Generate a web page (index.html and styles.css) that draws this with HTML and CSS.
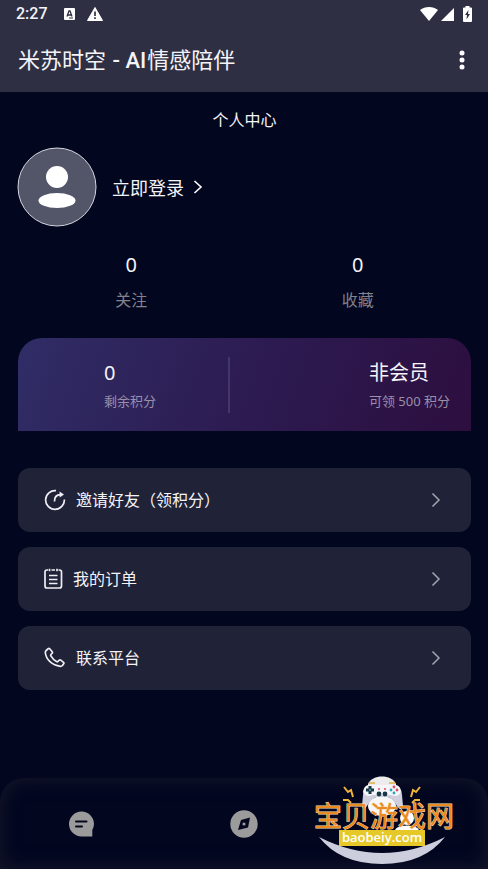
FILE: index.html
```html
<!DOCTYPE html>
<html lang="zh-CN">
<head>
    <meta charset="UTF-8">
    <meta name="viewport" content="width=device-width, initial-scale=1.0">
    <title>米苏时空 - AI情感陪伴</title>
    <link rel="stylesheet" href="styles.css">
</head>
<body>
    <header class="header">
        <div class="status-bar">
            <span class="time">2:27</span>
            <svg width="11" height="12" viewBox="0 0 11 12">
                <rect width="11" height="12" rx="1" fill="#fff"/>
                <path d="M3 8.500L5 3h1l2 5.500M3.800 7h3.400" fill="none" stroke="#2e2f43" stroke-width="1.300"/>
                <path d="M5 10h4" stroke="#2e2f43"/>
            </svg>
            <svg width="16" height="14" viewBox="0 0 16 14">
                <path d="M8 .5L15.500 13.500H.5z" fill="#fff" stroke="#fff" stroke-linejoin="round"/>
                <path d="M8 4.500v4.500M8 10.300v1.700" stroke="#2e2f43" stroke-width="1.700"/>
            </svg>
            <div class="status-right">
                <svg width="18" height="14" viewBox="0 0 18 14"><path d="M0 3C5-1 13-1 18 3L9 14z" fill="#fff"/></svg>
                <svg width="13" height="13" viewBox="0 0 13 13"><path d="M13 0v13H0z" fill="#fff"/></svg>
                <svg class="battery" width="9" height="16" viewBox="0 0 9 16">
                    <path d="M2.500 0h4v1.500H8q1 0 1 1V15q0 1-1 1H1q-1 0-1-1V2.500q0-1 1-1h1.500z" fill="#fff"/>
                    <path d="M5.500 4L2 9h2l-.5 4.500L7 8H5z" fill="#2e2f43"/>
                </svg>
            </div>
        </div>
        <div class="app-bar">
            <h1>米苏时空<span class="latin"> - AI</span>情感陪伴</h1>
            <button class="menu-btn" type="button" aria-label="更多">
                <svg width="6" height="20" viewBox="0 0 6 20" fill="#fff">
                    <circle cx="3" cy="3" r="2.500"/><circle cx="3" cy="10" r="2.500"/><circle cx="3" cy="17" r="2.500"/>
                </svg>
            </button>
        </div>
    </header>

    <main class="content">
        <h2>个人中心</h2>

        <a class="login" href="#login">
            <svg width="80" height="80" viewBox="0 0 80 80">
                <circle cx="40" cy="40" r="39" fill="#535568" stroke="#d5d6df"/>
                <circle cx="40" cy="30" r="11" fill="#fff"/>
                <ellipse cx="40" cy="53.500" rx="18.500" ry="7.500" fill="#fff"/>
            </svg>
            <span>立即登录</span>
            <svg width="10" height="14" viewBox="0 0 10 14"><path d="M1.500 1L8 7l-6.500 6" fill="none" stroke="#fff" stroke-width="1.600"/></svg>
        </a>

        <!-- Follow / favourite counters -->
        <div class="stats">
            <a href="#follow"><strong>0</strong><span>关注</span></a>
            <a href="#favorite"><strong>0</strong><span>收藏</span></a>
        </div>

        <!-- Points and membership -->
        <section class="member-card">
            <div class="points"><strong>0</strong><span>剩余积分</span></div>
            <div class="member"><strong>非会员</strong><span>可领 500 积分</span></div>
        </section>

        <nav class="menu">
            <a href="#invite">
                <svg width="22" height="22" viewBox="0 0 22 22" fill="none" stroke="#eeeef4" stroke-width="1.700">
                    <path d="M12 1.600A9.400 9.400 0 1 0 20.400 10.500"/>
                    <path d="M10.500 12.500C10.300 8 12.500 5.800 16.500 5.600"/>
                    <path d="M15.500 2.500L20 5.500l-4.300 3z" fill="#eeeef4" stroke="none"/>
                </svg>
                <span>邀请好友（领积分）</span>
                <svg class="arrow" width="10" height="16" viewBox="0 0 10 16"><path d="M1.500 1.500L8 8l-6.500 6.500" fill="none" stroke="#a3a3ae" stroke-width="1.500"/></svg>
            </a>
            <a href="#orders">
                <svg width="19" height="22" viewBox="0 0 19 22" fill="none" stroke="#eeeef4" stroke-width="1.700">
                    <path d="M4 2H3Q1 2 1 4v14q0 2 2 2h12.500q2 0 2-2V4q0-2-2-2h-1M7.500 2H11M5.500.8v2.400M13 .8v2.400"/>
                    <path d="M5 7.500h8.500M5 11.500h8.500M5 15.500h8.500"/>
                </svg>
                <span>我的订单</span>
                <svg class="arrow" width="10" height="16" viewBox="0 0 10 16"><path d="M1.500 1.500L8 8l-6.500 6.500" fill="none" stroke="#a3a3ae" stroke-width="1.500"/></svg>
            </a>
            <a href="#contact">
                <svg width="22" height="22" viewBox="0 0 22 22" fill="none" stroke="#eeeef4" stroke-width="1.700" stroke-linejoin="round">
                    <path d="M2.200 3.500L4.200 1.700q.8-.6 1.500.1l2.500 3q.6.800-.1 1.500L7 7.500q-.6.700-.1 1.400 2 3.600 5.600 5.700.8.400 1.400-.1l1.400-1.400q.7-.6 1.500 0l2.700 2.200q.8.700.2 1.500l-1.300 1.700q-.8.900-2 .8C8 18.500 2 12.500 1.300 5.500q0-1.200.9-2z"/>
                </svg>
                <span>联系平台</span>
                <svg class="arrow" width="10" height="16" viewBox="0 0 10 16"><path d="M1.500 1.500L8 8l-6.500 6.500" fill="none" stroke="#a3a3ae" stroke-width="1.500"/></svg>
            </a>
        </nav>
    </main>

    <nav class="tab-bar">
        <a href="#chat" aria-label="聊天">
            <svg width="25" height="26" viewBox="0 0 25 26">
                <path d="M12.500.5A12.400 12.400 0 0 1 25 13q0 3-1.700 6v6.500H12.500a12.500 12.500 0 0 1 0-25z" fill="#9b9b9b"/>
                <path d="M7 10.500h10.500M7 15.500h6" stroke="#04071e" stroke-width="2" stroke-linecap="round"/>
            </svg>
        </a>
        <a href="#explore" aria-label="发现">
            <svg width="28" height="28" viewBox="0 0 28 28">
                <circle cx="14" cy="14" r="13.700" fill="#9b9b9b"/>
                <path d="M20 7.500L18 17.500 8 20l3-10z" fill="#04071e"/>
                <circle cx="14" cy="14" r="1.600" fill="#9b9b9b"/>
            </svg>
        </a>
        <a href="#mine" aria-label="我的">
            <svg width="28" height="28" viewBox="0 0 28 28" fill="#fff">
                <circle cx="14" cy="8" r="7"/><ellipse cx="14" cy="21" rx="12" ry="5.500"/>
            </svg>
        </a>
    </nav>

    <!-- Site badge over the tab bar -->
    <svg class="site-badge" width="144" height="92" viewBox="0 0 144 92">
        <path d="M5 62Q68 94 131 62Q110 89 68 89Q26 89 5 62z" fill="#cdcedd"/>
        <!-- gamepad -->
        <path d="M54 9C58-1 78-1 82 9V17H54z" fill="#ececec"/>
        <ellipse cx="68" cy="31" rx="14" ry="10" fill="#f7f7fa"/>
        <path d="M55 10H81Q87 10 88 20L89 31Q87 37 83 31Q79 24 74 22H62Q57 24 53 31Q49 37 48 31L49 20Q50 10 55 10z" fill="#cfcfdd"/>
        <path d="M55 10H81Q86 10 87 17 84 23 77 20H59Q52 23 49 17 50 10 55 10z" fill="#f5f5fa"/>
        <path d="M55 8h6M75 8h6" stroke="#e5bd62" stroke-width="2"/>
        <path d="M56 11v8M52 15h8" stroke="#183744" stroke-width="3"/>
        <circle cx="56" cy="15" r="1" fill="#55b6b9"/>
        <circle cx="65" cy="19" r="2.400" fill="#183744"/><circle cx="71" cy="19" r="2.400" fill="#183744"/>
        <circle cx="80" cy="12" r="1.400" fill="#d94f64"/><circle cx="80" cy="18" r="1.400" fill="#28a6b8"/>
        <circle cx="77" cy="15" r="1.400" fill="#28a6b8"/><circle cx="83" cy="15" r="1.400" fill="#d94f64"/>
        <path d="M64 14h2M70 14h2" stroke="#e34b59" stroke-width="1.500"/>
        <!-- sparks -->
        <path d="M30 12l4 5 3-2 2 7M29 25l5 0 3 3M106 12l-4 5-3-2-2 7M106 25l-5 0-3 3" fill="none" stroke="#f0b636" stroke-width="2"/>
        <text class="badge-name" x="0" y="52">宝贝游戏网</text>
        <rect x="25" y="55" width="86" height="16" fill="#e6c928"/>
        <text class="badge-site" x="68" y="67" text-anchor="middle">baobeiy.com</text>
    </svg>
</body>
</html>
```
FILE: styles.css
```css
* {
    box-sizing: border-box;
}
body {
    position: relative;
    display: flex;
    flex-direction: column;
    min-height: 100vh;
    margin: 0;
    background-color: #02061f;
    color: #f4f4f8;
    font-family: "Noto Sans", "Noto Sans CJK SC", sans-serif;
}
a {
    color: inherit;
    text-decoration: none;
}
svg {
    display: block;
    flex-shrink: 0;
}
h1, h2 {
    margin: 0;
    font-weight: 400;
}
strong {
    font-weight: 400;
}

/* Header */
.header {
    background-color: #2e2f43;
}
.status-bar {
    display: flex;
    align-items: center;
    gap: 12px;
    height: 28px;
    padding: 0 16px;
}
.time {
    margin-right: 4px;
    font: 500 16px/18px Roboto, sans-serif;
}
.status-right {
    display: flex;
    align-items: center;
    gap: 3px;
    margin-left: auto;
}
.battery {
    margin-left: 6px;
}
.app-bar {
    display: flex;
    align-items: center;
    justify-content: space-between;
    height: 64px;
    padding: 0 16px 0 18px;
}
.app-bar h1 {
    font-size: 22px;
    line-height: 32px;
}
.latin {
    padding: 0 1px;
    font-family: Roboto, sans-serif;
    font-weight: 500;
}
.menu-btn {
    padding: 0 7px;
    border: 0;
    background: none;
}

/* Profile */
.content {
    flex: 1;
    padding: 16px 17px 24px 18px;
}
.content h2 {
    font-size: 16px;
    line-height: 24px;
    text-align: center;
}
.login {
    display: flex;
    align-items: center;
    gap: 9px;
    width: max-content;
    margin: 15px 0 24px;
    font-size: 18px;
}
.login svg:first-child {
    margin: 0 6px 0 -1px;
}
.stats {
    display: grid;
    grid-template-columns: 1fr 1fr;
    margin-bottom: 26px;
}
.stats a {
    display: flex;
    flex-direction: column;
    align-items: center;
    gap: 9px;
}
.stats strong {
    font-size: 20px;
    line-height: 28px;
}
.stats span {
    color: #81828e;
    font-size: 16px;
    line-height: 24px;
}

/* Points card */
.member-card {
    display: flex;
    align-items: center;
    justify-content: space-between;
    height: 93px;
    margin-bottom: 37px;
    padding-right: 21px;
    border-radius: 24px 24px 0 0;
    background: linear-gradient(110deg, #302d66, #2c1a50 55%, #2d0e3f);
}
.points, .member {
    display: flex;
    flex-direction: column;
}
.points {
    width: 49%;
    padding-left: 86px;
    border-right: 2px solid #42366a;
}
.member-card strong {
    font-size: 20px;
    line-height: 32px;
}
.member-card span {
    color: #9b8faa;
    font-size: 13px;
    line-height: 24px;
}

/* Menu rows */
.menu {
    display: flex;
    flex-direction: column;
    gap: 15px;
}
.menu a {
    display: flex;
    align-items: center;
    gap: 10px;
    height: 64px;
    padding: 0 30px 0 26px;
    border-radius: 12px;
    background-color: #202237;
    font-size: 16px;
    line-height: 24px;
}
.arrow {
    margin-left: auto;
}

/* Bottom tabs */
.tab-bar {
    display: grid;
    grid-template-columns: repeat(3, 1fr);
    align-items: center;
    justify-items: center;
    height: 91px;
    border-radius: 24px 24px 0 0;
    box-shadow: inset 0 0 20px #181a2b;
}
.site-badge {
    position: absolute;
    right: 30px;
    bottom: 2px;
    overflow: visible;
}
.badge-name {
    fill: #eb8a1f;
    stroke: #f7dcb0;
    stroke-width: 1px;
    paint-order: stroke;
    font-size: 28px;
}
.badge-site {
    fill: #fff;
    font: 600 13px "Open Sans", sans-serif;
}
```
